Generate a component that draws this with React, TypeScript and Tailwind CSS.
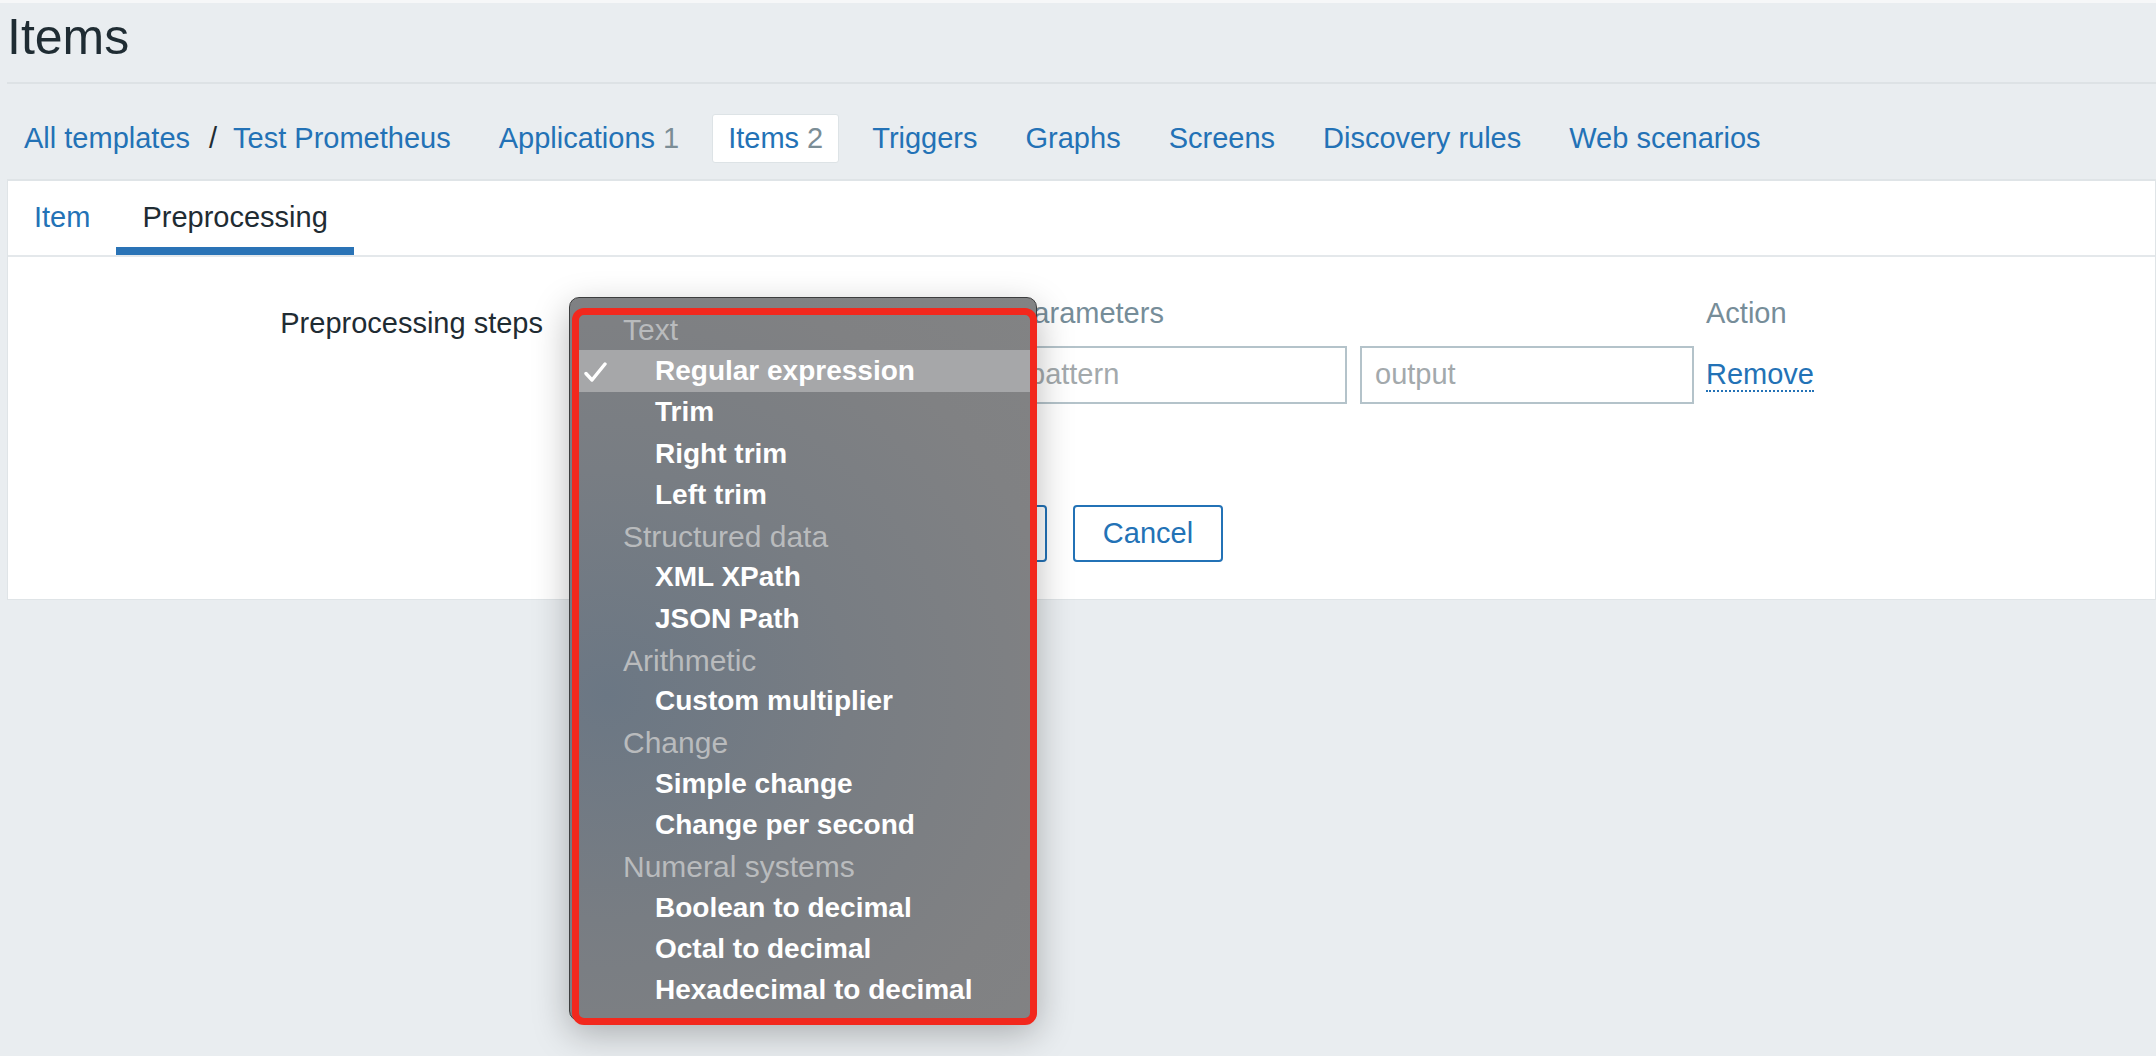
import React from "react";

type MenuRow = { label: string; group?: boolean; checked?: boolean };

const menuRows: MenuRow[] = [
  { label: "Text", group: true },
  { label: "Regular expression", checked: true },
  { label: "Trim" },
  { label: "Right trim" },
  { label: "Left trim" },
  { label: "Structured data", group: true },
  { label: "XML XPath" },
  { label: "JSON Path" },
  { label: "Arithmetic", group: true },
  { label: "Custom multiplier" },
  { label: "Change", group: true },
  { label: "Simple change" },
  { label: "Change per second" },
  { label: "Numeral systems", group: true },
  { label: "Boolean to decimal" },
  { label: "Octal to decimal" },
  { label: "Hexadecimal to decimal" },
];

const navTabs = [
  { label: "Applications", count: "1" },
  { label: "Items", count: "2", active: true },
  { label: "Triggers" },
  { label: "Graphs" },
  { label: "Screens" },
  { label: "Discovery rules" },
  { label: "Web scenarios" },
];

// native select popup, opened over the "Name" select
function SelectMenu() {
  return (
    <>
      <div className="absolute left-[569px] top-[297px] h-[724px] w-[468px] overflow-hidden rounded-[10px] border border-[#3c3d3e] bg-[radial-gradient(ellipse_at_8%_55%,#6b7784_0%,#787d83_40%,#808183_75%,#828384_100%)] pt-[11px] shadow-[0_12px_36px_rgba(0,0,0,0.28)]">
        {menuRows.map((row) => (
          <div
            key={row.label}
            className={
              "relative mx-[6px] flex h-[41.3px] items-center whitespace-nowrap " +
              (row.checked ? "bg-[#a6a7a9]" : "")
            }
          >
            {row.checked && (
              <svg
                className="absolute left-[8px] top-[12px]"
                width="23"
                height="20"
                viewBox="0 0 23 20"
                fill="none"
              >
                <path
                  d="M2 11.5 L8 18 L21 2"
                  stroke="#ffffff"
                  strokeWidth="3.4"
                  strokeLinecap="round"
                  strokeLinejoin="round"
                />
              </svg>
            )}
            {row.group ? (
              <span className="pl-[47px] text-[30px] text-[#b9bbbd]">{row.label}</span>
            ) : (
              <span className="pl-[79px] text-[28px] font-bold text-white">{row.label}</span>
            )}
          </div>
        ))}
      </div>
      <div className="pointer-events-none absolute left-[572px] top-[308px] h-[717px] w-[465px] rounded-[12px] border-[7px] border-[#f2281d]" />
    </>
  );
}

export default function App() {
  return (
    <div className="relative h-screen w-full overflow-hidden bg-[#e9edf0] font-['Liberation_Sans',Arial,sans-serif] text-[#1f2c33]">
      <div className="h-[3px] bg-[#f6f7f8]" />

      {/* page title */}
      <div className="ml-[7px] h-[81px] border-b-2 border-[#dde2e5] pt-[6px]">
        <h1 className="text-[50px] leading-[56px] text-[#1f2c33]">Items</h1>
      </div>

      {/* template navigation */}
      <div className="ml-[7px] flex items-center gap-[18px] pb-[16px] pl-[2px] pt-[30px] text-[29px] text-[#2372b6]">
        <div className="flex h-[49px] items-center px-[15px]">
          <span>All templates</span>
          <span className="ml-[19px] mr-[16px] text-[#1f2c33]">/</span>
          <span>Test Prometheus</span>
        </div>
        {navTabs.map((tab) => (
          <div
            key={tab.label}
            className={
              "flex h-[49px] items-center px-[15px] " +
              (tab.active ? "rounded-[3px] border border-[#dde3e6] bg-white" : "")
            }
          >
            <span>{tab.label}</span>
            {tab.count && <span className="ml-[8px] text-[#7b8d96]">{tab.count}</span>}
          </div>
        ))}
      </div>

      {/* form panel */}
      <div className="ml-[7px] border border-t-2 border-[#dfe4e7] bg-white">
        <div className="flex h-[76px] border-b-2 border-[#e4e8eb] text-[29px]">
          <div className="flex h-full items-center px-[26px] text-[#2372b6]">Item</div>
          <div className="flex h-full items-center border-b-[8px] border-[#2a73b6] px-[26px] pt-[8px] text-[#1f2c33]">
            Preprocessing
          </div>
        </div>

        <div className="flex pb-[37px] pt-[37px] text-[29px]">
          <div className="mt-[9px] w-[535px] text-right leading-[40px] text-[#1f2c33]">
            Preprocessing steps
          </div>
          <div className="ml-[28px] flex flex-col">
            <div className="flex h-[40px] items-center text-[#768d99]">
              <span className="w-[443px]" />
              <span className="w-[692px]">Parameters</span>
              <span>Action</span>
            </div>
            <div className="mt-[12px] flex h-[58px] items-center">
              <div className="h-full w-[430px] border-2 border-[#b4c3ca]" />
              <div className="ml-[13px] flex h-full w-[333px] items-center border-2 border-[#b4c3ca] px-[13px] text-[#a3a9ac]">
                pattern
              </div>
              <div className="ml-[13px] flex h-full w-[334px] items-center border-2 border-[#b4c3ca] px-[13px] text-[#a3a9ac]">
                output
              </div>
              <span className="ml-[12px] border-b-2 border-dotted border-[#2372b6] leading-[32px] text-[#2372b6]">
                Remove
              </span>
            </div>
            <div className="mt-[18px] h-[40px]" />
            <div className="mt-[43px] flex h-[57px] gap-[26px]">
              <div className="w-[140px] rounded-[4px] bg-[#2372b6]" />
              <div className="w-[130px] rounded-[4px] border-2 border-[#2372b6] bg-white" />
              <div className="w-[154px] rounded-[4px] border-2 border-[#2372b6] bg-white" />
              <button className="w-[150px] rounded-[4px] border-2 border-[#2372b6] bg-white text-[#2372b6]">
                Cancel
              </button>
            </div>
          </div>
        </div>
      </div>

      <SelectMenu />
    </div>
  );
}
